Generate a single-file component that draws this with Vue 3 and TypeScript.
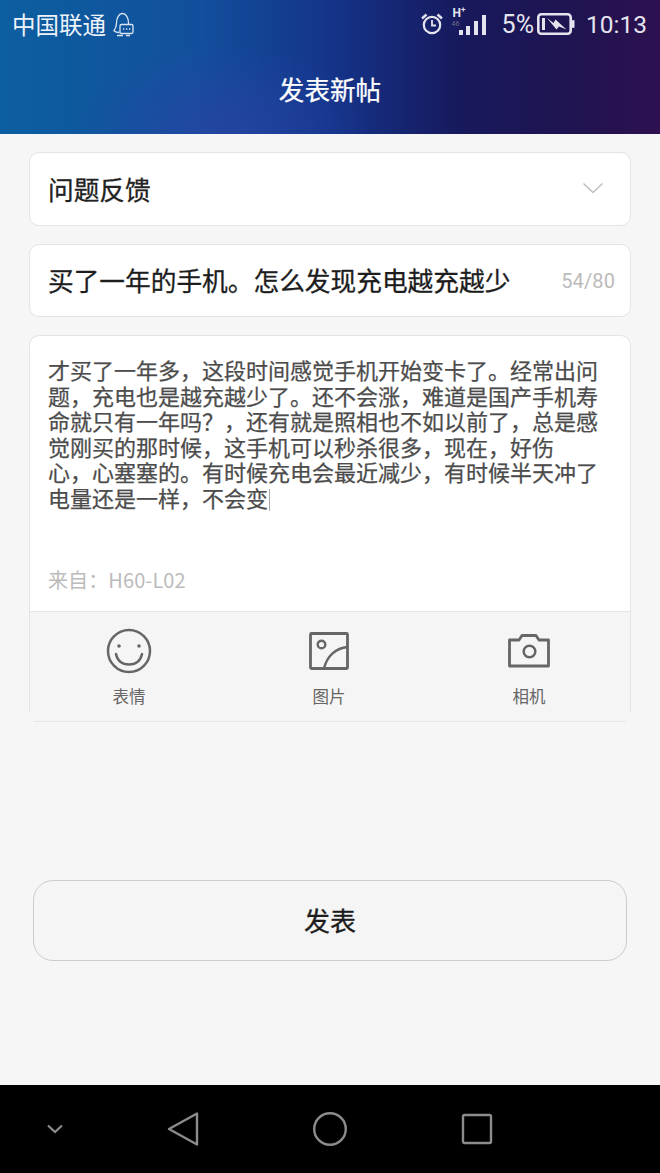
<template>
  <div class="page">
    <header class="top">
      <div class="status">
        <div class="status-left">
          <span class="carrier">中国联通</span>
          <svg class="qq" width="22" height="25" viewBox="0 0 22 25" fill="none" stroke="#dbe6f4" stroke-width="1.300">
            <path d="M7.500 20.500c-2.500 0-4.500-.8-5.500-1.800 1.300-1.700 2.500-3.700 2.500-7.700C4.500 5.800 7 1.500 10.500 1.500S16.500 5.800 16.500 11v1" />
            <rect x="8" y="12.500" width="13" height="9" rx="1.500" />
            <path d="M5 23.500h6M14 23.500h4" />
            <path d="M11 17h1.300M14 17h1.300M17 17h1.300" stroke-width="1.500" />
          </svg>
        </div>
        <div class="status-right">
          <svg width="26" height="26" viewBox="0 0 26 26" fill="none" stroke="#e4e4ee" class="alarm">
            <circle cx="13" cy="14" r="8.200" stroke-width="2.200" />
            <path d="M13 9v5.500h4" stroke-width="1.800" />
            <path d="M3 7.500 7.500 3.500M23 7.500 18.500 3.500" stroke-width="2.400" />
          </svg>
          <span class="signal">
            <span class="hplus">H<sup>+</sup></span>
            <span class="g46">46</span>
            <span class="bar b1"></span>
            <span class="bar b2"></span>
            <span class="bar b3"></span>
            <span class="bar b4"></span>
          </span>
          <span class="pct">5%</span>
          <svg class="battery" width="38" height="24" viewBox="0 0 38 24" fill="none">
            <rect x="1.300" y="2.300" width="32.400" height="19.400" rx="3" stroke="#e4e4ee" stroke-width="2.600" />
            <rect x="5" y="6" width="3" height="12" fill="#e4e4ee" />
            <rect x="35" y="8" width="2.500" height="8" rx="1" fill="#e4e4ee" />
            <path d="M10 6l6.500 5 2-3.500 11 10-7.500-3-2.500 3z" fill="#e4e4ee" />
          </svg>
          <span class="time">10:13</span>
        </div>
      </div>
      <h1 class="title">发表新帖</h1>
    </header>

    <main class="content">
      <div class="card row">
        <span class="row-text">问题反馈</span>
        <svg class="chevron" width="24" height="14" viewBox="0 0 24 14" fill="none" stroke="#bdbdbd" stroke-width="1.400">
          <path d="M2.500 2.500 12 11.500 21.500 2.500" />
        </svg>
      </div>

      <div class="card row short">
        <span class="row-text strong">{{ postTitle }}</span>
        <span class="count">54/80</span>
      </div>

      <div class="editor">
        <div class="editor-main">
          <p class="body-text">{{ postBody }}<span class="caret"></span></p>
          <p class="source">来自：H60-L02</p>
        </div>
        <div class="tools">
          <div class="tool">
            <svg width="46" height="46" viewBox="0 0 46 46" fill="none" stroke="#666" stroke-width="2.500">
              <circle cx="23" cy="23" r="21" />
              <circle cx="13" cy="18" r="1.800" fill="#666" stroke="none" />
              <circle cx="33" cy="18" r="1.800" fill="#666" stroke="none" />
              <path d="M10 26c1.500 7 6.500 10.500 13 10.500s11.500-3.500 13-10.500" stroke-linecap="round" />
            </svg>
            <span>表情</span>
          </div>
          <div class="tool">
            <svg width="46" height="46" viewBox="0 0 46 46" fill="none" stroke="#666" stroke-width="2.800">
              <rect x="4.500" y="5.500" width="37" height="35" rx="1" />
              <circle cx="15.500" cy="16.500" r="3.800" stroke-width="2.400" />
              <path d="M18 40.500C21 28 30 20 41.500 19" stroke-width="2.400" />
            </svg>
            <span>图片</span>
          </div>
          <div class="tool">
            <svg width="46" height="46" viewBox="0 0 46 46" fill="none" stroke="#666" stroke-width="2.800">
              <path d="M3.500 12h9.500l3-4.500h14l3 4.500h9.500v26h-39z" stroke-linejoin="round" />
              <circle cx="23.500" cy="23.500" r="5.800" stroke-width="2.500" />
            </svg>
            <span>相机</span>
          </div>
        </div>
        <div class="edge"></div>
      </div>

      <button class="submit" type="button">发表</button>
    </main>

    <nav class="nav">
      <div class="nav-item">
        <svg width="18" height="12" viewBox="0 0 18 12" fill="none" stroke="#8c8c8c" stroke-width="2.200">
          <path d="M2 2.500 9 9l7-6.500" />
        </svg>
      </div>
      <div class="nav-item wide">
        <svg width="32" height="36" viewBox="0 0 32 36" fill="none" stroke="#8c8c8c" stroke-width="2.400" stroke-linejoin="round">
          <path d="M30 2.500v31L2 18z" />
        </svg>
      </div>
      <div class="nav-item wide">
        <svg width="36" height="36" viewBox="0 0 36 36" fill="none" stroke="#8c8c8c" stroke-width="2.400">
          <circle cx="18" cy="18" r="15.800" />
        </svg>
      </div>
      <div class="nav-item wide">
        <svg width="32" height="32" viewBox="0 0 32 32" fill="none" stroke="#8c8c8c" stroke-width="2.400">
          <rect x="2" y="2" width="28" height="28" rx="1.500" />
        </svg>
      </div>
    </nav>
  </div>
</template>

<script setup lang="ts">
const postTitle = '买了一年的手机。怎么发现充电越充越少';
const postBody =
  '才买了一年多，这段时间感觉手机开始变卡了。经常出问题，充电也是越充越少了。还不会涨，难道是国产手机寿命就只有一年吗？，还有就是照相也不如以前了，总是感觉刚买的那时候，这手机可以秒杀很多，现在，好伤\n心，心塞塞的。有时候充电会最近减少，有时候半天冲了电量还是一样，不会变';
</script>

<style>
html,
body {
  margin: 0;
  background: #f6f6f6;
}
</style>

<style scoped>
.page {
  width: 660px;
  height: 1173px;
  display: flex;
  flex-direction: column;
  background: #f6f6f6;
  font-family: 'Roboto', 'Noto Sans CJK SC', sans-serif;
  overflow: hidden;
}

.top {
  height: 134px;
  flex: none;
  background:
    radial-gradient(ellipse 150px 90px at 225px 134px, rgba(44, 66, 165, 0.7), rgba(44, 66, 165, 0)),
    linear-gradient(90deg, #0c5fa0 0%, #124f9c 30%, #14348a 50%, #17195c 70%, #22134f 90%, #2e1050 100%);
  color: #fff;
}

.status {
  height: 48px;
  display: flex;
  align-items: center;
  justify-content: space-between;
  padding: 0 13px 0 12px;
}

.status-left,
.status-right {
  display: flex;
  align-items: center;
}

.carrier {
  font-size: 23.500px;
  color: #eef3fa;
  font-family: 'Noto Sans CJK SC', sans-serif;
}

.qq {
  margin-left: 6px;
}

.alarm {
  margin-right: 7px;
}

.signal {
  position: relative;
  width: 36px;
  height: 26px;
  margin-right: 14px;
}

.hplus {
  position: absolute;
  left: 1px;
  top: -5px;
  font-size: 12px;
  font-weight: 700;
  color: #e4e4ee;
}

.hplus sup {
  font-size: 8px;
  line-height: 0;
}

.g46 {
  position: absolute;
  left: 0;
  top: 9px;
  font-size: 7px;
  color: #6c6c8a;
}

.bar {
  position: absolute;
  bottom: 2px;
  width: 4px;
  background: #e4e4ee;
}

.b1 {
  left: 7px;
  height: 5px;
}

.b2 {
  left: 14px;
  height: 9px;
}

.b3 {
  left: 22px;
  height: 14px;
}

.b4 {
  left: 30px;
  height: 20px;
}

.pct {
  font-size: 25px;
  color: #e4e4ee;
  margin-right: 3px;
}

.time {
  font-size: 24.500px;
  color: #e4e4ee;
  margin-left: 11px;
}

.title {
  margin: 0;
  padding-top: 22px;
  text-align: center;
  font-size: 25.600px;
  line-height: 38px;
  font-weight: 400;
  -webkit-text-stroke: 0.25px #fff;
  font-family: 'Noto Sans CJK SC', sans-serif;
}

.content {
  flex: 1;
  min-height: 0;
  padding: 18px 29px 0;
  display: flex;
  flex-direction: column;
  font-family: 'Noto Sans CJK SC', sans-serif;
}

.card {
  background: #fff;
  border: 1px solid #e4e4e4;
  border-radius: 10px;
}

.row {
  height: 74px;
  box-sizing: border-box;
  margin-bottom: 18px;
  padding: 0 15px 2px 18px;
  display: flex;
  align-items: center;
  justify-content: space-between;
}

.short {
  height: 73px;
}

.row-text {
  font-size: 25.700px;
  font-weight: 400;
  -webkit-text-stroke: 0.3px #222;
  color: #222;
}

.strong {
  color: #1c1c1c;
}

.chevron {
  margin-right: 10px;
}

.count {
  font-family: 'Roboto', sans-serif;
  font-size: 20px;
  letter-spacing: 0.100px;
  padding-top: 2px;
  color: #bbb;
}

.editor {
  display: flex;
  flex-direction: column;
}

.editor-main {
  height: 277px;
  box-sizing: border-box;
  background: #fff;
  border: 1px solid #e4e4e4;
  border-bottom: 1px solid #e6e6e6;
  border-radius: 10px 10px 0 0;
  padding: 21px 18px 0;
  display: flex;
  flex-direction: column;
}

.body-text {
  margin: 0;
  flex: 1;
  font-size: 22px;
  line-height: 25.600px;
  font-weight: 400;
  -webkit-text-stroke: 0.25px #4c4c4c;
  white-space: pre-line;
  color: #4c4c4c;
}

.caret {
  display: inline-block;
  width: 1px;
  height: 22px;
  margin-left: 1px;
  vertical-align: -4px;
  background: #aaa;
}

.source {
  margin: 0 0 17px;
  font-size: 20px;
  line-height: 28px;
  letter-spacing: 0.100px;
  color: #bbb;
}

.tools {
  height: 100px;
  box-sizing: border-box;
  display: flex;
  padding: 16px 1px 0 0;
  border-left: 1px solid #e4e4e4;
  border-right: 1px solid #e4e4e4;
  background: #f5f5f5;
}

.tool {
  flex: 1;
  display: flex;
  flex-direction: column;
  align-items: center;
  gap: 11px;
  font-size: 16.500px;
  line-height: 22px;
  color: #666;
}

.tool:first-child {
  margin-left: -1px;
}

.edge {
  height: 1px;
  margin: 9px 5px 0;
  background: #e6e6e6;
}

.submit {
  margin: 158px 4px 0;
  height: 81px;
  flex: none;
  padding: 0 0 3px;
  border: 1px solid #ccc;
  border-radius: 20px;
  background: #f5f5f5;
  font-family: 'Noto Sans CJK SC', sans-serif;
  font-size: 26px;
  font-weight: 400;
  -webkit-text-stroke: 0.3px #1c1c1c;
  color: #1c1c1c;
}

.nav {
  height: 88px;
  flex: none;
  background: #000;
  display: flex;
}

.nav-item {
  width: 109.500px;
  display: flex;
  align-items: center;
  justify-content: center;
}

.wide {
  width: 147px;
}
</style>
